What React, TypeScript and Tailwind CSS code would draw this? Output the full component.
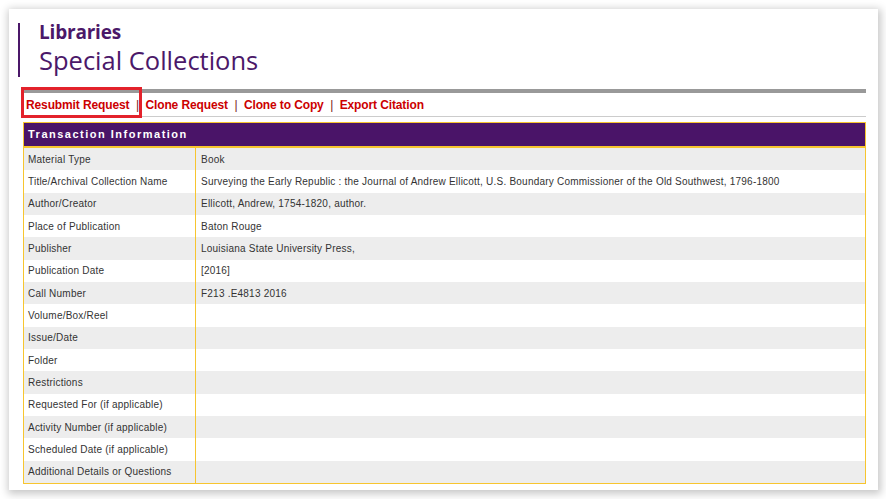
const ROWS: [string, string][] = [
  ["Material Type", "Book"],
  [
    "Title/Archival Collection Name",
    "Surveying the Early Republic : the Journal of Andrew Ellicott, U.S. Boundary Commissioner of the Old Southwest, 1796-1800",
  ],
  ["Author/Creator", "Ellicott, Andrew, 1754-1820, author."],
  ["Place of Publication", "Baton Rouge"],
  ["Publisher", "Louisiana State University Press,"],
  ["Publication Date", "[2016]"],
  ["Call Number", "F213 .E4813 2016"],
  ["Volume/Box/Reel", ""],
  ["Issue/Date", ""],
  ["Folder", ""],
  ["Restrictions", ""],
  ["Requested For (if applicable)", ""],
  ["Activity Number (if applicable)", ""],
  ["Scheduled Date (if applicable)", ""],
  ["Additional Details or Questions", ""],
];

const LINKS = ["Resubmit Request", "Clone Request", "Clone to Copy", "Export Citation"];

function Header() {
  return (
    <div className="ml-[9px] mt-[14px] h-[54px] border-l-2 border-[#4b1869] pl-[19px] text-[#4b1869] font-['Open_Sans',sans-serif]">
      <div className="text-[19px] leading-[18px] font-bold tracking-[-0.2px]">Libraries</div>
      <div className="text-[25.5px] leading-[38px]">Special Collections</div>
    </div>
  );
}

function ActionBar() {
  return (
    <div className="relative">
      <div className="h-[4px] bg-[#999999]" />
      <div className="h-[24px] flex items-center pl-[4px] border-b border-[#cccccc] text-[12px] font-bold tracking-[-0.12px] text-[#cc0000]">
        {LINKS.map((l, i) => (
          <span key={l} className="flex items-center">
            {i > 0 && <span className="mx-[6.5px] font-normal text-[#7a2020]">|</span>}
            <span>{l}</span>
          </span>
        ))}
      </div>
      <div className="absolute left-[-1px] top-[-2px] w-[121px] h-[31px] border-[3px] border-[#e3222b]" />
    </div>
  );
}

function TransactionTable() {
  return (
    <div className="mt-[5px] ml-[1px] border border-[#f7c52f] text-[10px] tracking-[0.22px] text-[#333333]">
      <div className="h-[23px] bg-[#4a1468] border-b-2 border-[#f7c52f] box-content flex items-center pl-[4px] text-[11px] font-bold tracking-[1.5px] text-white">
        Transaction Information
      </div>
      {ROWS.map(([label, value], i) => (
        <div key={label} className={`flex h-[22.33px] ${i % 2 === 0 ? "bg-[#ededed]" : "bg-white"}`}>
          <div className="w-[172px] shrink-0 border-r border-[#f7c52f] flex items-center pl-[4px]">{label}</div>
          <div className="flex items-center pl-[5px]">{value}</div>
        </div>
      ))}
    </div>
  );
}

export default function App() {
  return (
    <div className="w-[886px] h-[499px] bg-white p-[9px] font-['Liberation_Sans',Arial,sans-serif]">
      <div className="w-[869px] h-[481px] bg-white shadow-[1px_2px_8px_2px_rgba(0,0,0,0.22)] overflow-hidden">
        <Header />
        <div className="ml-[13px] mt-[12px] w-[844px]">
          <ActionBar />
          <TransactionTable />
        </div>
      </div>
    </div>
  );
}
